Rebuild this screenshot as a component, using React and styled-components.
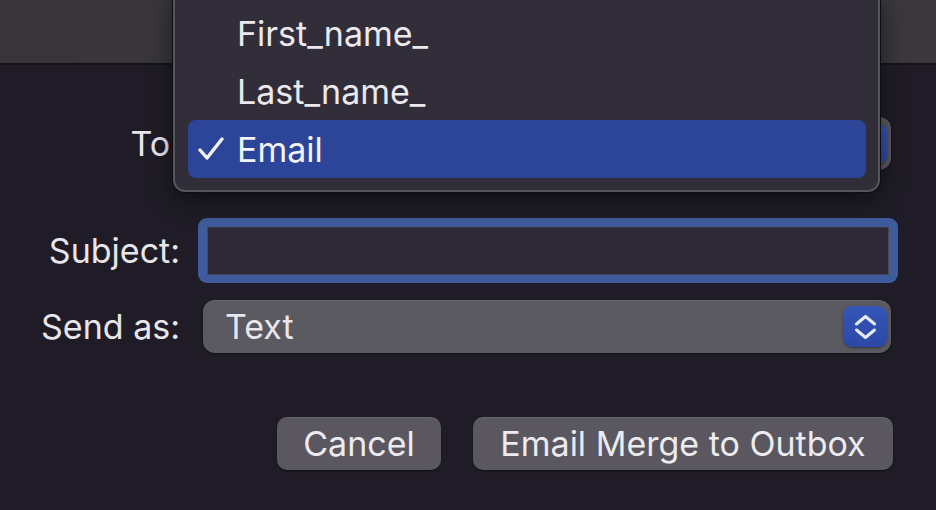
import React from "react";
import styled, { createGlobalStyle, css } from "styled-components";

const GlobalStyle = createGlobalStyle`
  html, body {
    margin: 0;
    padding: 0;
    background: #1f1c27;
  }
  body {
    font-family: Inter, "Noto Sans", "Liberation Sans", sans-serif;
    -webkit-font-smoothing: antialiased;
  }
`;

const Window = styled.div`
  position: relative;
  width: 936px;
  height: 510px;
  overflow: hidden;
  background: #1f1c27;
  color: #e8e6eb;
  font-size: 34px;
`;

const TitleBar = styled.div`
  height: 63px;
  background: linear-gradient(90deg, #37343a 0%, #3c393f 60%, #3a373d 100%);
  border-bottom: 2px solid #141218;
`;

const Form = styled.div`
  display: grid;
  grid-template-columns: 180px 688px;
  column-gap: 23px;
  align-items: center;
  padding-top: 52px;
`;

const Label = styled.div`
  text-align: right;
  white-space: nowrap;
  ${({ $mt }) => $mt && css`margin-top: ${$mt}px;`}
`;

const Cell = styled.div`
  ${({ $mt }) => $mt && css`margin-top: ${$mt}px;`}
`;

const Popup = styled.div`
  position: relative;
  height: 53px;
  box-sizing: border-box;
  display: flex;
  align-items: center;
  justify-content: space-between;
  padding: 0 4px 0 22px;
  border-radius: 12px;
  background: #5b5960;
  box-shadow: inset 0 1px 0 rgba(255, 255, 255, 0.08), 0 1px 2px rgba(0, 0, 0, 0.5);
`;

const Stepper = styled.div`
  margin-left: auto;
  width: 44px;
  height: 41px;
  border-radius: 9px;
  display: flex;
  align-items: center;
  justify-content: center;
  background: linear-gradient(180deg, #3556b8 0%, #2b48a6 100%);
  box-shadow: 0 1px 2px rgba(0, 0, 0, 0.45);
`;

const TextField = styled.div`
  height: 65px;
  margin: 0 -7px 0 -5px;
  box-sizing: border-box;
  border-radius: 9px;
  background: #3e5c9b;
  padding: 9px 9px 8px 9px;
`;

const FieldInner = styled.div`
  height: 100%;
  box-sizing: border-box;
  background: #2d2936;
  border: 1px solid #4a4751;
  border-top-color: #3a3742;
`;

const ButtonRow = styled.div`
  display: flex;
  justify-content: flex-end;
  gap: 32px;
  margin-right: -2px;
  margin-top: 64px;
`;

const Button = styled.div`
  height: 53px;
  box-sizing: border-box;
  display: flex;
  align-items: center;
  justify-content: center;
  width: ${({ $w }) => $w}px;
  border-radius: 10px;
  background: #5a5760;
  box-shadow: inset 0 1px 0 rgba(255, 255, 255, 0.08), 0 1px 2px rgba(0, 0, 0, 0.5);
  color: #ecebef;
`;

const Menu = styled.div`
  position: absolute;
  left: 173px;
  top: -10px;
  width: 707px;
  box-sizing: border-box;
  padding: 12px 12px 12px 13px;
  border-radius: 12px;
  background: #312e39;
  border: 2px solid #57555c;
  box-shadow: 0 0 0 1px #0e0d12, 0 8px 24px rgba(0, 0, 0, 0.5);
`;

const MenuItem = styled.div`
  height: 58px;
  display: flex;
  align-items: center;
  border-radius: 8px;
  padding-left: 10px;
  color: #ebe9ee;
  ${({ $active }) =>
    $active &&
    css`
      background: #2c4599;
      color: #f3f3f7;
    `}
`;

const Check = styled.span`
  width: 39px;
  display: flex;
  align-items: center;
`;

function UpDown() {
  return (
    <svg width="25" height="30" viewBox="0 0 25 30" fill="none">
      <path d="M3.5 12 L12.5 4.5 L21.5 12" stroke="#e9ecf8" strokeWidth="3" strokeLinecap="round" strokeLinejoin="round" />
      <path d="M3.5 18 L12.5 25.5 L21.5 18" stroke="#e9ecf8" strokeWidth="3" strokeLinecap="round" strokeLinejoin="round" />
    </svg>
  );
}

function CheckMark() {
  return (
    <svg width="26" height="24" viewBox="0 0 26 24" fill="none">
      <path d="M2 13 L9 21 L24 2" stroke="#f3f3f7" strokeWidth="3.4" strokeLinecap="round" strokeLinejoin="round" />
    </svg>
  );
}

const items = ["First_name_", "Last_name_", "Email"];

export default function App() {
  return (
    <Window>
      <GlobalStyle />
      <TitleBar />
      <Form>
        <Label>To:</Label>
        <Popup>
          <Stepper>
            <UpDown />
          </Stepper>
        </Popup>

        <Label $mt={48}>Subject:</Label>
        <Cell $mt={48}>
          <TextField>
            <FieldInner />
          </TextField>
        </Cell>

        <Label $mt={17}>Send as:</Label>
        <Cell $mt={17}>
          <Popup>
            <span>Text</span>
            <Stepper>
              <UpDown />
            </Stepper>
          </Popup>
        </Cell>

        <span />
        <ButtonRow>
          <Button $w={164}>Cancel</Button>
          <Button $w={420}>Email Merge to Outbox</Button>
        </ButtonRow>
      </Form>

      <Menu>
        {items.map((item) => (
          <MenuItem key={item} $active={item === "Email"}>
            <Check>{item === "Email" && <CheckMark />}</Check>
            {item}
          </MenuItem>
        ))}
      </Menu>
    </Window>
  );
}
